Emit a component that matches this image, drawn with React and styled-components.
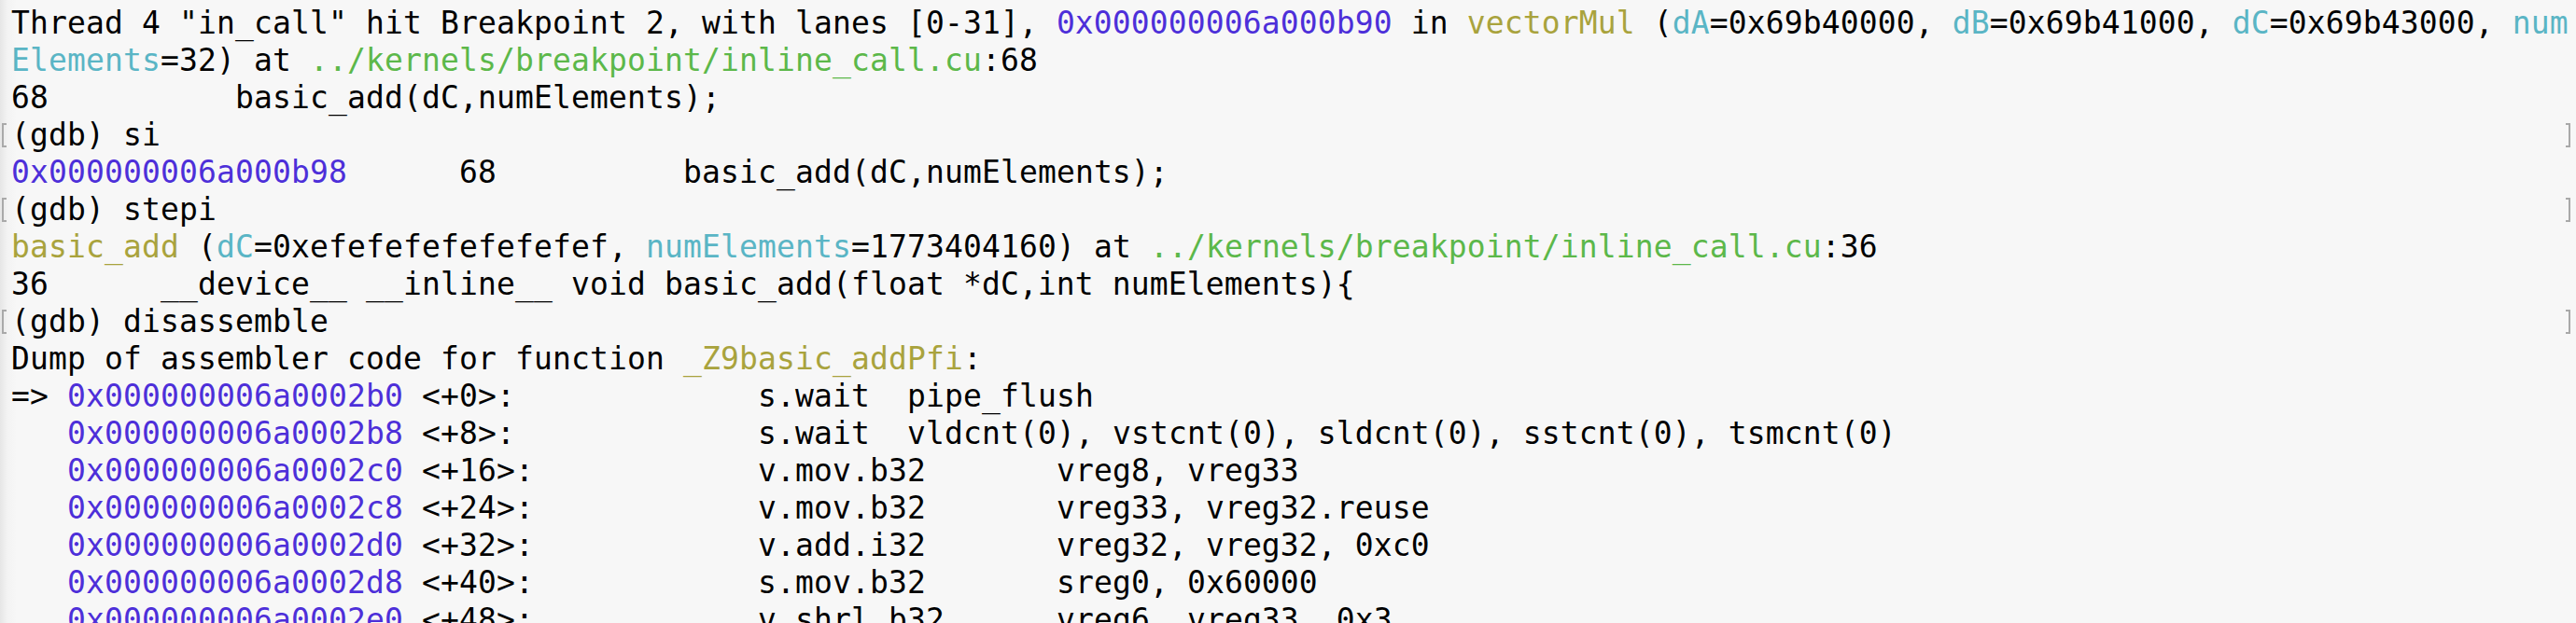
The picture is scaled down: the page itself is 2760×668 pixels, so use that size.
import React from "react";
import styled, { createGlobalStyle, css } from "styled-components";

const GlobalStyle = createGlobalStyle`
  html, body {
    margin: 0;
    padding: 0;
    background: #f7f7f7;
  }
`;

const Terminal = styled.div`
  width: 2760px;
  height: 668px;
  overflow: hidden;
  padding-top: 5px;
  box-sizing: border-box;
  background: linear-gradient(to right, #e6e6e6 0px, #f3f3f3 8px, #f7f7f7 18px, #f7f7f7 100%);
  font-family: "DejaVu Sans Mono", "Liberation Mono", monospace;
  font-size: 33px;
  letter-spacing: 0.13px;
  color: #000;
`;

const bracket = css`
  content: "";
  position: absolute;
  top: 7px;
  height: 22px;
  width: 3px;
  border: 2px solid #a9a9a9;
`;

const Line = styled.div`
  position: relative;
  height: 40px;
  line-height: 40px;
  padding-left: 12px;
  white-space: pre;
  ${(p) =>
    p.$marked &&
    css`
      &::before {
        ${bracket};
        left: 2px;
        border-right: none;
      }
      &::after {
        ${bracket};
        right: 6px;
        border-left: none;
      }
    `}
`;

const Addr = styled.span`
  color: #4d2fd9;
`;
const Func = styled.span`
  color: #a9a33d;
`;
const Arg = styled.span`
  color: #5ab5c5;
`;
const Path = styled.span`
  color: #5cb84a;
`;

const asm = [
  ["=> ", "0x000000006a0002b0", " <+0>:", "s.wait  pipe_flush"],
  ["   ", "0x000000006a0002b8", " <+8>:", "s.wait  vldcnt(0), vstcnt(0), sldcnt(0), sstcnt(0), tsmcnt(0)"],
  ["   ", "0x000000006a0002c0", " <+16>:", "v.mov.b32       vreg8, vreg33"],
  ["   ", "0x000000006a0002c8", " <+24>:", "v.mov.b32       vreg33, vreg32.reuse"],
  ["   ", "0x000000006a0002d0", " <+32>:", "v.add.i32       vreg32, vreg32, 0xc0"],
  ["   ", "0x000000006a0002d8", " <+40>:", "s.mov.b32       sreg0, 0x60000"],
  ["   ", "0x000000006a0002e0", " <+48>:", "v.shrl.b32      vreg6, vreg33, 0x3"],
];

// pad the "<+n>:" column out to col 40 like gdb's tabs do
const pad = (s, col) => s + " ".repeat(Math.max(1, col - s.length));

export default function App() {
  return (
    <>
      <GlobalStyle />
      <Terminal>
        <Line>
          Thread 4 "in_call" hit Breakpoint 2, with lanes [0-31], <Addr>0x000000006a000b90</Addr> in{" "}
          <Func>vectorMul</Func> (<Arg>dA</Arg>=0x69b40000, <Arg>dB</Arg>=0x69b41000, <Arg>dC</Arg>
          =0x69b43000, <Arg>num</Arg>
        </Line>
        <Line>
          <Arg>Elements</Arg>=32) at <Path>../kernels/breakpoint/inline_call.cu</Path>:68
        </Line>
        <Line>{"68          basic_add(dC,numElements);"}</Line>
        <Line $marked>(gdb) si</Line>
        <Line>
          <Addr>0x000000006a000b98</Addr>
          {"      68          basic_add(dC,numElements);"}
        </Line>
        <Line $marked>(gdb) stepi</Line>
        <Line>
          <Func>basic_add</Func> (<Arg>dC</Arg>=0xefefefefefefefef, <Arg>numElements</Arg>=1773404160) at{" "}
          <Path>../kernels/breakpoint/inline_call.cu</Path>:36
        </Line>
        <Line>{"36      __device__ __inline__ void basic_add(float *dC,int numElements){"}</Line>
        <Line $marked>(gdb) disassemble</Line>
        <Line>
          Dump of assembler code for function <Func>_Z9basic_addPfi</Func>:
        </Line>
        {asm.map(([lead, addr, off, ins]) => (
          <Line key={addr}>
            {lead}
            <Addr>{addr}</Addr>
            {pad(off, 40 - 21)}
            {ins}
          </Line>
        ))}
      </Terminal>
    </>
  );
}
